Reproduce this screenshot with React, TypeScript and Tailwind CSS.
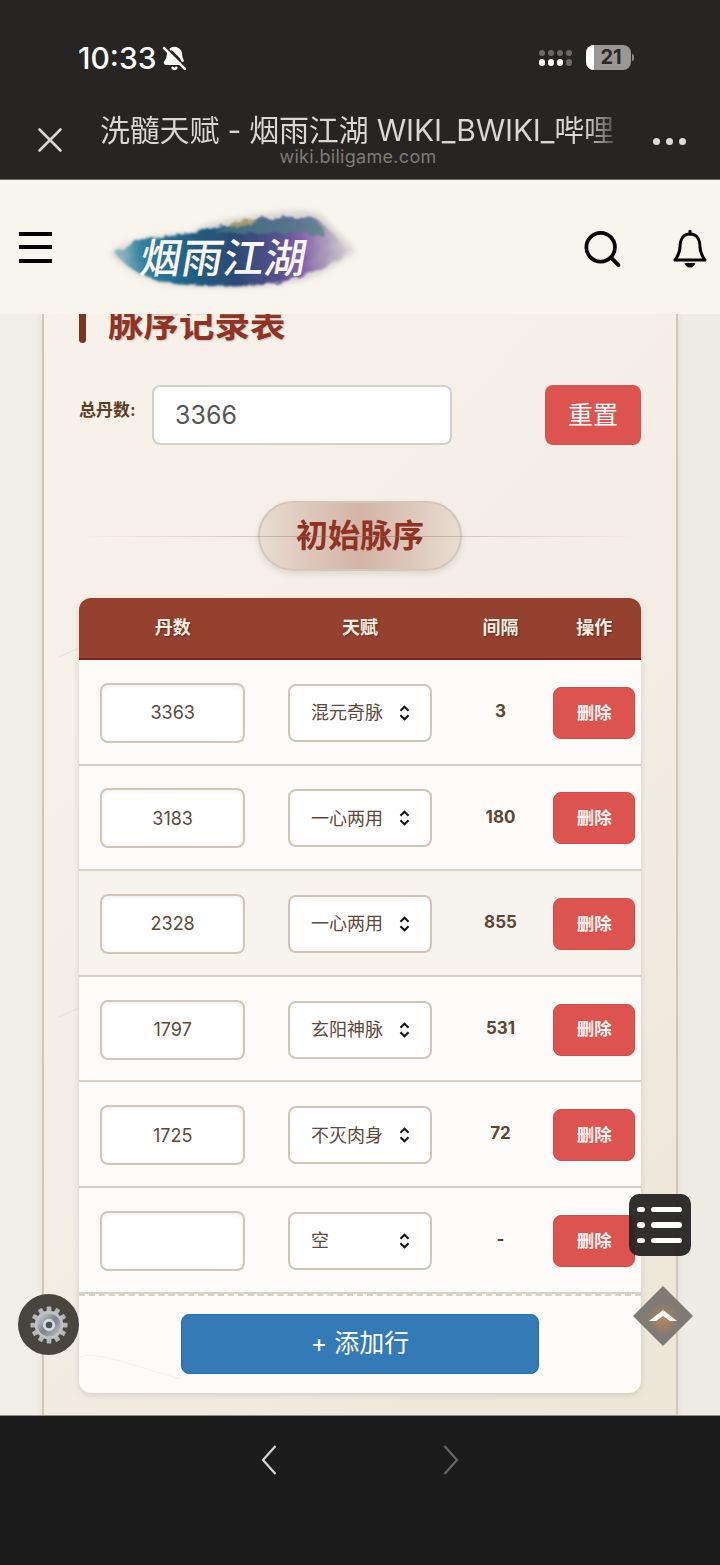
import { BellOff, Search, X } from "lucide-react";

const rows = [
  { dan: "3363", talent: "混元奇脉", gap: "3" },
  { dan: "3183", talent: "一心两用", gap: "180" },
  { dan: "2328", talent: "一心两用", gap: "855", shaded: true },
  { dan: "1797", talent: "玄阳神脉", gap: "531" },
  { dan: "1725", talent: "不灭肉身", gap: "72" },
  { dan: "", talent: "空", gap: "-" },
];

function StatusBar() {
  return (
    <div className="flex h-[100px] items-start justify-between pl-[78px] pr-[86px] pt-[40px]">
      <div className="flex items-center gap-[5px]">
        <span className="text-[30px] font-medium leading-[36px] text-white">10:33</span>
        <BellOff size={25} strokeWidth={2.6} className="text-white" fill="white" />
      </div>
      <div className="flex items-center gap-[14px] pt-[5px]">
        <div className="grid grid-cols-4 gap-x-[3px] gap-y-[3px]">
          {[0, 1, 2, 3].map((i) => (
            <span key={i} className="h-[6px] w-[6px] rounded-full bg-[#6c6a69]" />
          ))}
          {[0, 1, 2].map((i) => (
            <span key={i} className="h-[7px] w-[6px] rounded-full bg-white" />
          ))}
          <span className="h-[7px] w-[6px] rounded-full bg-[#6c6a69]" />
        </div>
        <div className="flex items-center gap-[1px]">
          <div className="flex h-[25px] w-[45px] overflow-hidden rounded-[8px] bg-[#9a9896]">
            <span className="w-[8px] bg-white" />
            <span className="flex-1 pr-[3px] text-center text-[20px] font-bold leading-[25px] text-[#2b2927]">21</span>
          </div>
          <span className="h-[7px] w-[2px] rounded-r bg-[#8a8886]" />
        </div>
      </div>
    </div>
  );
}

function TitleBar() {
  return (
    <div className="flex h-[80px] items-start border-b border-[#6e675e] pl-[29px] pr-[34px]">
      <X size={42} strokeWidth={1.5} className="mt-[19px] shrink-0 text-[#d8d6d3]" />
      <div className="ml-[29px] flex w-[516px] flex-col items-center pt-[10px]">
        <div className="w-full overflow-hidden whitespace-nowrap bg-[linear-gradient(90deg,#dad8d5_94%,#4a4846_100%)] bg-clip-text text-[30px] leading-[40px] tracking-[-0.2px] text-transparent">
          洗髓天赋 - 烟雨江湖 WIKI_BWIKI_哔哩
        </div>
        <div className="mt-[-4px] text-[18px] leading-[22px] tracking-[0.3px] text-[#7d7b79]">wiki.biligame.com</div>
      </div>
      <div className="ml-auto mt-[38px] flex gap-[6px]">
        <span className="h-[7px] w-[7px] rounded-full bg-[#dddbd8]" />
        <span className="h-[7px] w-[7px] rounded-full bg-[#dddbd8]" />
        <span className="h-[7px] w-[7px] rounded-full bg-[#dddbd8]" />
      </div>
    </div>
  );
}

function Logo() {
  return (
    <div className="relative h-[78px] w-[250px]">
      <svg viewBox="0 0 250 78" className="h-full w-full overflow-visible">
        <defs>
          <linearGradient id="ink" x1="0" x2="1" y1="0" y2="0">
            <stop offset="0" stopColor="#9dbcc3" />
            <stop offset="0.12" stopColor="#2f7f9f" />
            <stop offset="0.34" stopColor="#1f5d80" />
            <stop offset="0.52" stopColor="#2d4b74" />
            <stop offset="0.7" stopColor="#59508f" />
            <stop offset="0.8" stopColor="#8460ab" />
            <stop offset="0.9" stopColor="#a99db8" />
            <stop offset="1" stopColor="#d4d0d2" />
          </linearGradient>
          <filter id="rough" x="-10%" y="-20%" width="120%" height="140%">
            <feTurbulence type="fractalNoise" baseFrequency="0.09" numOctaves="4" seed="7" />
            <feDisplacementMap in="SourceGraphic" scale="8" />
            <feGaussianBlur stdDeviation="1.2" />
          </filter>
          <filter id="soft">
            <feGaussianBlur stdDeviation="3" />
          </filter>
        </defs>
        <path
          d="M4 44 C18 32 44 26 86 24 C98 12 130 10 150 6 C176 2 204 0 214 6 C226 18 240 32 248 42 C234 52 220 62 204 68 C170 80 110 80 66 76 C40 72 18 60 4 44 Z"
          fill="#b9b6b8"
          filter="url(#soft)"
          opacity="0.55"
        />
        <g transform="translate(3 7)">
          <path
            d="M6 38 C18 24 46 20 88 18 C100 10 130 8 150 4 C176 0 198 0 208 4 C220 14 232 26 238 36 C226 46 208 54 192 60 C160 72 110 72 66 68 C40 64 18 54 6 38 Z"
            fill="url(#ink)"
            filter="url(#rough)"
          />
          <path d="M104 16 C130 4 170 0 204 2 C212 10 216 16 214 20 C180 16 140 16 104 16 Z" fill="#4d8088" opacity="0.7" filter="url(#rough)" />
          <path d="M116 8 L140 2 L150 6 L124 12 Z" fill="#b4a469" opacity="0.8" filter="url(#rough)" />
        </g>
      </svg>
      <span className="absolute left-[34px] top-[24px] skew-x-[-10deg] whitespace-nowrap text-[41px] font-medium leading-[50px] tracking-[0.5px] text-[#fbf8f4]">
        烟雨江湖
      </span>
    </div>
  );
}

function Header() {
  return (
    <header className="flex h-[134px] items-center bg-[#f8f5ee] pl-[19px] pr-[12px]">
      <div className="flex w-[34px] flex-col gap-[9.5px]">
        <span className="h-[4px] bg-black" />
        <span className="h-[4px] bg-black" />
        <span className="h-[4px] bg-black" />
      </div>
      <div className="ml-[55px] mt-[1px]">
        <Logo />
      </div>
      <Search size={44} strokeWidth={2.1} className="ml-[224px] mt-[4px] text-black" />
      <svg viewBox="0 0 36 38" className="ml-[48px] mt-[4px] h-[38px] w-[36px] shrink-0" fill="none" stroke="black" strokeWidth="3">
        <path d="M18 4 C10 4 8 11 8 17 C8 23 6 26 3 30 H33 C30 26 28 23 28 17 C28 11 26 4 18 4 Z" strokeLinejoin="round" />
        <path d="M18 1 V4" strokeLinecap="round" />
        <path d="M14 33 C15 37 21 37 22 33" fill="black" />
      </svg>
    </header>
  );
}

function Row({ dan, talent, gap, shaded }: { dan: string; talent: string; gap: string; shaded?: boolean }) {
  return (
    <div
      className={`grid h-[105.6px] grid-cols-[2fr_2fr_1fr_1fr] items-center border-b-2 border-[#d8d0c4] pt-[2px] ${
        shaded ? "bg-[#f7f4ef]" : "bg-transparent"
      }`}
    >
      <div className="flex justify-center">
        <input
          readOnly
          value={dan}
          className="h-[60px] w-[145px] rounded-[8px] border-2 border-[#cfc6b8] bg-white text-center text-[18px] text-[#5b4a3c] shadow-[inset_0_1px_4px_rgba(0,0,0,0.08)]"
        />
      </div>
      <div className="flex justify-center">
        <div className="flex h-[58px] w-[144px] items-center justify-between rounded-[8px] border-2 border-[#cfc6b8] bg-white pl-[21px] pr-[19px] text-[18px] text-[#5b4a3c]">
          <span>{talent}</span>
          <svg viewBox="0 0 14 20" className="h-[18px] w-[13px]" fill="none" stroke="#111" strokeWidth="2.2">
            <path d="M2.5 7.5 L7 3 L11.5 7.5" />
            <path d="M2.5 12.5 L7 17 L11.5 12.5" />
          </svg>
        </div>
      </div>
      <div className="-mt-[2px] text-center text-[17px] font-bold text-[#5f4630]">{gap}</div>
      <div className="flex justify-center">
        <button className="h-[52px] w-[82px] rounded-[8px] border border-[#d24a47] bg-[#dc5350] text-[17.5px] font-semibold text-[#fdf3ef]">
          删除
        </button>
      </div>
    </div>
  );
}

function Arc({ className }: { className: string }) {
  return (
    <svg viewBox="0 0 120 40" className={`pointer-events-none absolute h-[40px] w-[120px] ${className}`} fill="none" stroke="#e6e1d7" strokeWidth="1">
      <path d="M0 22 C8 18 14 15 22 13 C40 10 70 22 118 36" />
    </svg>
  );
}

function Gear() {
  const teeth = [0, 30, 60, 90, 120, 150, 180, 210, 240, 270, 300, 330];
  return (
    <svg viewBox="0 0 40 40" className="h-[38px] w-[38px]">
      <defs>
        <linearGradient id="gearBody" x1="0" x2="1" y1="0" y2="1">
          <stop offset="0" stopColor="#d3d6da" />
          <stop offset="0.5" stopColor="#7b808a" />
          <stop offset="1" stopColor="#c0c3c7" />
        </linearGradient>
      </defs>
      <g fill="#b4b6b8">
        {teeth.map((a) => (
          <rect key={a} x="17.5" y="0.5" width="5" height="7" rx="1" transform={`rotate(${a} 20 20)`} />
        ))}
      </g>
      <circle cx="20" cy="20" r="15" fill="#bfc1c3" />
      <circle cx="20" cy="20" r="12" fill="url(#gearBody)" />
      <circle cx="20" cy="20" r="6.5" fill="#d8dadc" />
      <circle cx="20" cy="20" r="3.5" fill="#4f5257" />
    </svg>
  );
}

export default function App() {
  return (
    <div className="flex h-[1565px] w-[720px] flex-col overflow-hidden bg-[#1c1c1c] font-['Inter','Noto_Sans_CJK_SC',sans-serif]">
      <div className="h-[180px] bg-[#272524]">
        <StatusBar />
        <TitleBar />
      </div>
      <Header />
      <main className="relative h-[1102px] overflow-hidden border-b border-[#8f8b84] bg-[linear-gradient(90deg,#f1eee7,#f0ede6_50%,#eeebe4)] px-[42px]">
        <section className="relative flow-root h-full border-x-2 border-[#cfc7b9] bg-[linear-gradient(135deg,#f6f2ea,#f3eee5_50%,#ece6d8)] px-[35px] shadow-[0_0_6px_rgba(0,0,0,0.07)]">
          <Arc className="left-[15px] top-[321px]" />
          <Arc className="left-[15px] top-[681px]" />

          <div className="-mt-[12px] flex h-[45px] items-start">
            <span className="mt-[1px] h-[40px] w-[7px] shrink-0 rounded-b-[4px] bg-[#7b3322]" />
            <h1 className="ml-[22px] whitespace-nowrap text-[35.5px] font-bold leading-[45px] text-[#8f3324] [text-shadow:1px_1px_2px_rgba(0,0,0,0.2)]">
              脉序记录表
            </h1>
          </div>

          <div className="mt-[38px] flex h-[60px]">
            <label className="w-[73px] whitespace-nowrap pt-[14px] text-[17px] font-bold leading-[22px] text-[#5f3d24]">总丹数:</label>
            <input
              readOnly
              value="3366"
              className="h-[60px] w-[300px] rounded-[8px] border-2 border-[#d2d0cd] bg-white pl-[21px] text-[25px] text-[#555]"
            />
            <button className="ml-auto h-[60px] w-[96px] rounded-[8px] bg-[#dc5350] pt-[1px] text-[25px] text-white">重置</button>
          </div>

          <div className="relative mt-[56px] flex h-[70px] justify-center">
            <div className="flex h-[70px] w-[204px] items-center justify-center rounded-[35px] border-2 border-[#d6c6b9] bg-[linear-gradient(90deg,#e8dcd1,#d3b3a5_50%,#e8dcd1)] text-[32px] font-bold text-[#8f3324] shadow-[0_3px_6px_rgba(0,0,0,0.1)]">
              初始脉序
            </div>
            <span className="absolute inset-x-0 top-[35px] h-[1px] bg-[linear-gradient(90deg,transparent,rgba(143,110,90,0.3)_30%,rgba(143,110,90,0.5)_50%,rgba(143,110,90,0.3)_70%,transparent)]" />
          </div>

          <div className="relative mt-[27px] overflow-hidden rounded-[12px] bg-[#fdfbf9] shadow-[0_2px_6px_rgba(0,0,0,0.12)]">
            <div className="grid h-[62px] grid-cols-[2fr_2fr_1fr_1fr] items-center border-b-2 border-[#84231a] bg-[#94412f] pb-[2px] text-center text-[18px] font-bold text-[#f7eee3] [text-shadow:1px_1px_2px_rgba(0,0,0,0.35)]">
              <span>丹数</span>
              <span>天赋</span>
              <span>间隔</span>
              <span>操作</span>
            </div>
            {rows.map((r, i) => (
              <Row key={i} {...r} />
            ))}
            <div className="flex h-[99px] justify-center border-t-2 border-dashed border-[#d8d0c4] pt-[18px]">
              <button className="h-[60px] w-[358px] rounded-[8px] border border-[#2e6da4] bg-[#337ab7] text-[25px] text-white">
                + 添加行
              </button>
            </div>
            <Arc className="left-[-17px] top-[745px] opacity-40" />
          </div>
        </section>

        {/* floating buttons */}
        <div className="absolute left-[629px] top-[880px] flex h-[62px] w-[62px] flex-col justify-center gap-[10px] rounded-[10px] bg-[#262524]/95 pl-[8px]">
          {[0, 1, 2].map((i) => (
            <div key={i} className="flex items-center gap-[6px]">
              <span className="h-[5.5px] w-[8px] rounded-full bg-white" />
              <span className="h-[5.5px] w-[31px] rounded-full bg-white" />
            </div>
          ))}
        </div>
        <div className="absolute left-[18px] top-[980px] flex h-[61px] w-[61px] items-center justify-center rounded-full bg-[#48453f]">
          <Gear />
        </div>
        <div className="absolute left-[633px] top-[972px] h-[60px] w-[60px]">
          <svg viewBox="0 0 60 60" className="h-full w-full">
            <defs>
              <radialGradient id="glow" cx="0.5" cy="0.55" r="0.28">
                <stop offset="0" stopColor="#b8855f" />
                <stop offset="1" stopColor="#7f7a73" />
              </radialGradient>
              <filter id="edge">
                <feGaussianBlur stdDeviation="0.6" />
              </filter>
            </defs>
            <path d="M30 0 L60 30 L30 60 L0 30 Z" fill="url(#glow)" filter="url(#edge)" />
            <path d="M16 35 L30 24 L44 35 L37 35 L30 30 L23 35 Z" fill="white" />
          </svg>
        </div>
      </main>
      <nav className="flex flex-1 items-start pl-[261px] pt-[29px]">
        <svg viewBox="0 0 16 30" className="h-[30px] w-[16px]" fill="none" stroke="#d6d6d6" strokeWidth="2.2">
          <path d="M14.5 1 L2 15 L14.5 29" />
        </svg>
        <svg viewBox="0 0 16 30" className="ml-[166px] h-[30px] w-[16px]" fill="none" stroke="#666" strokeWidth="2.2">
          <path d="M1.5 1 L14 15 L1.5 29" />
        </svg>
      </nav>
    </div>
  );
}
